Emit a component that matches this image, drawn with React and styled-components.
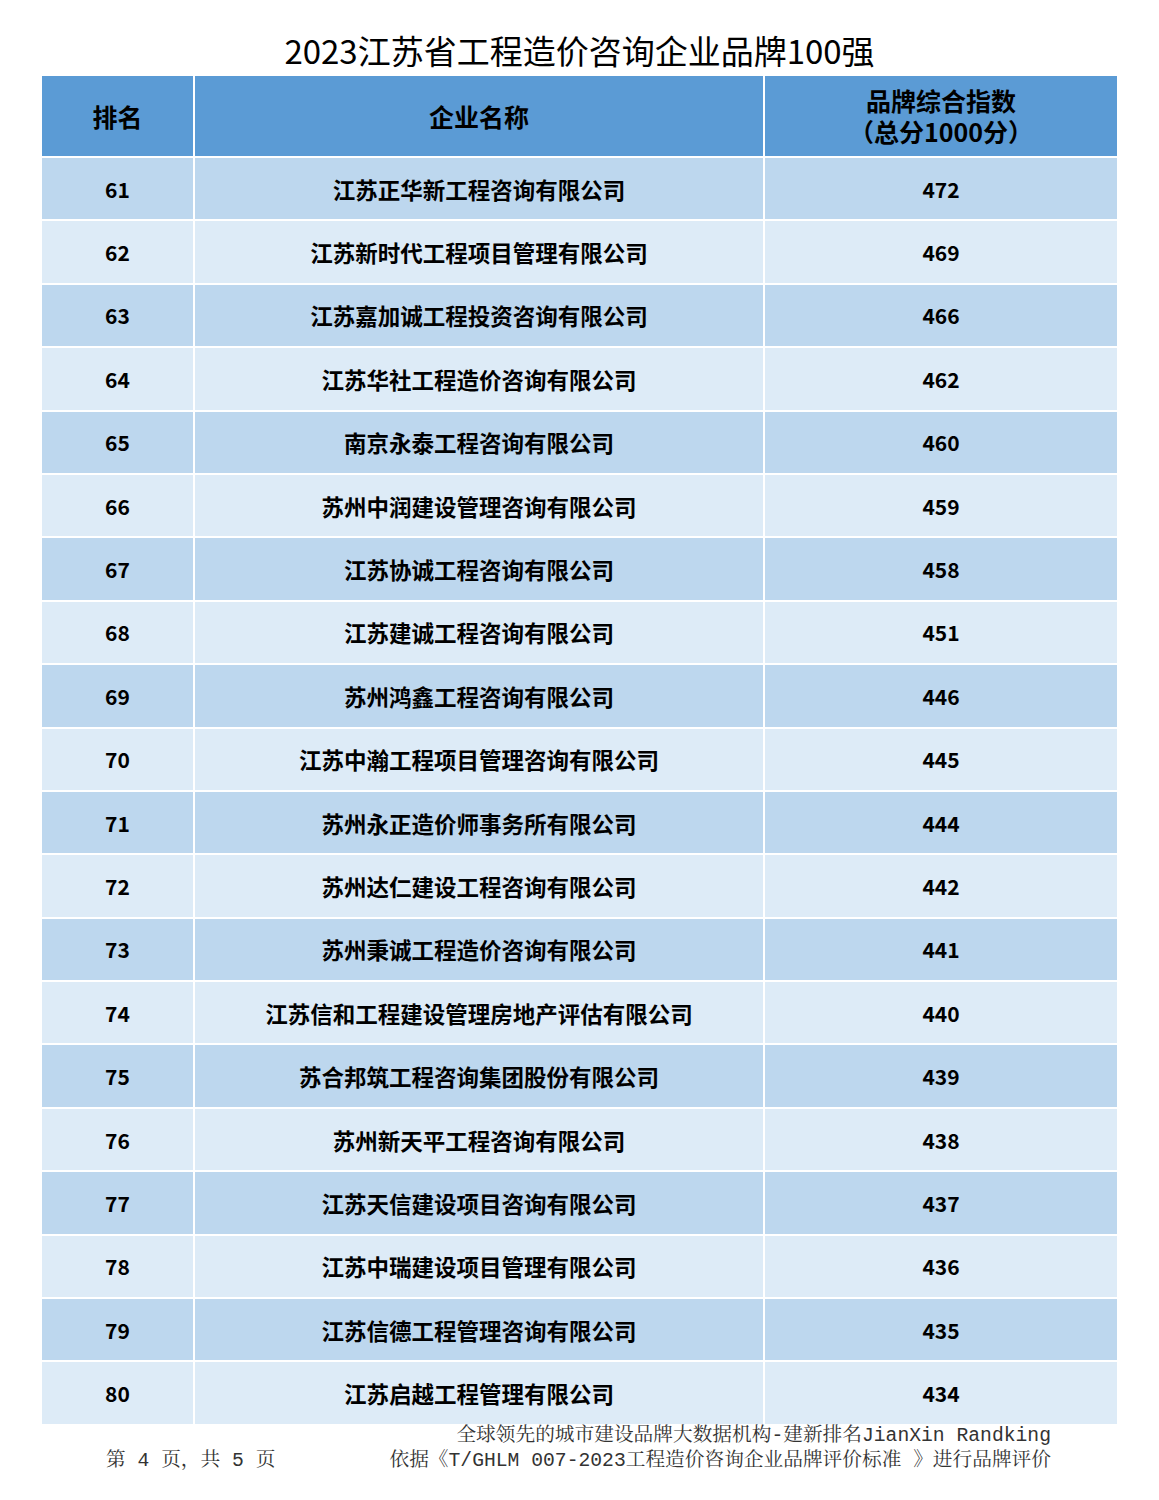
import styled, { createGlobalStyle } from "styled-components";

const GlobalStyle = createGlobalStyle`
  html, body {
    margin: 0;
    padding: 0;
    background: #ffffff;
  }
  body {
    font-family: "Noto Sans CJK SC", "Noto Sans", sans-serif;
    color: #000;
  }
`;

const rows = [
  [61, "江苏正华新工程咨询有限公司", 472],
  [62, "江苏新时代工程项目管理有限公司", 469],
  [63, "江苏嘉加诚工程投资咨询有限公司", 466],
  [64, "江苏华社工程造价咨询有限公司", 462],
  [65, "南京永泰工程咨询有限公司", 460],
  [66, "苏州中润建设管理咨询有限公司", 459],
  [67, "江苏协诚工程咨询有限公司", 458],
  [68, "江苏建诚工程咨询有限公司", 451],
  [69, "苏州鸿鑫工程咨询有限公司", 446],
  [70, "江苏中瀚工程项目管理咨询有限公司", 445],
  [71, "苏州永正造价师事务所有限公司", 444],
  [72, "苏州达仁建设工程咨询有限公司", 442],
  [73, "苏州秉诚工程造价咨询有限公司", 441],
  [74, "江苏信和工程建设管理房地产评估有限公司", 440],
  [75, "苏合邦筑工程咨询集团股份有限公司", 439],
  [76, "苏州新天平工程咨询有限公司", 438],
  [77, "江苏天信建设项目咨询有限公司", 437],
  [78, "江苏中瑞建设项目管理有限公司", 436],
  [79, "江苏信德工程管理咨询有限公司", 435],
  [80, "江苏启越工程管理有限公司", 434],
];

const Page = styled.div`
  width: 1159px;
  height: 1500px;
  box-sizing: border-box;
`;

const Title = styled.h1`
  margin: 0;
  height: 76px;
  box-sizing: border-box;
  padding-top: 28px;
  line-height: 44px;
  text-align: center;
  font-size: 33px;
  font-weight: 400;
  color: #000;
`;

const Table = styled.div`
  margin: 0 42px;
  display: grid;
  grid-template-columns: 151px 568px 1fr;
  grid-template-rows: 80px;
  grid-auto-rows: 61.4px;
  gap: 2px;
  background: #ffffff;
`;

const HeadCell = styled.div`
  background: #5b9bd5;
  display: flex;
  align-items: center;
  justify-content: center;
  font-size: 25px;
  font-weight: 700;
  line-height: 31px;
  text-align: center;
`;

const Cell = styled.div`
  background: ${(p) => (p.$odd ? "#bdd7ee" : "#ddebf7")};
  display: flex;
  align-items: center;
  justify-content: center;
  font-size: ${(p) => (p.$name ? "22.5px" : "21px")};
  font-weight: 700;
  color: #000;
`;

const Footer = styled.div`
  padding: 0 108px 0 106px;
  font-family: "Liberation Mono", "Noto Serif CJK SC", "Noto Sans CJK SC", monospace;
  font-size: 19.7px;
  line-height: 25px;
  color: #333;
`;

const FootLine = styled.div`
  display: flex;
  justify-content: ${(p) => (p.$split ? "space-between" : "flex-end")};
  white-space: pre;
`;

export default function App() {
  return (
    <Page>
      <GlobalStyle />
      <Title>2023江苏省工程造价咨询企业品牌100强</Title>
      <Table>
        <HeadCell>排名</HeadCell>
        <HeadCell>企业名称</HeadCell>
        <HeadCell>
          品牌综合指数
          <br />
          （总分1000分）
        </HeadCell>
        {rows.map(([rank, name, score], i) => (
          <>
            <Cell key={`r${rank}`} $odd={i % 2 === 0}>{rank}</Cell>
            <Cell key={`n${rank}`} $odd={i % 2 === 0} $name>{name}</Cell>
            <Cell key={`s${rank}`} $odd={i % 2 === 0}>{score}</Cell>
          </>
        ))}
      </Table>
      <Footer>
        <FootLine>全球领先的城市建设品牌大数据机构-建新排名JianXin Randking</FootLine>
        <FootLine $split>
          <span>第 4 页，共 5 页</span>
          <span>依据《T/GHLM 007-2023工程造价咨询企业品牌评价标准 》进行品牌评价</span>
        </FootLine>
      </Footer>
    </Page>
  );
}
